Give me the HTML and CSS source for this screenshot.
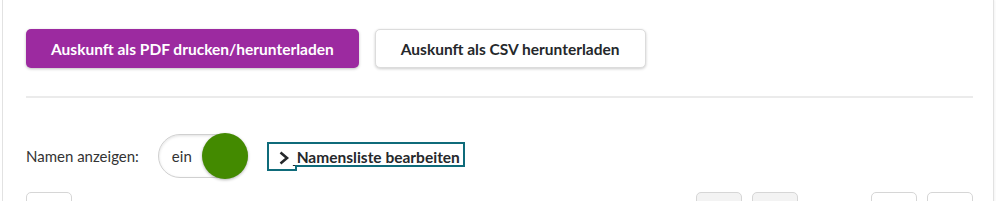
FILE: index.html
```html
<!DOCTYPE html>
<html lang="de">
<head>
    <meta charset="UTF-8">
    <meta name="viewport" content="width=device-width, initial-scale=1.0">
    <title>Auskunft</title>
    <link rel="stylesheet" href="styles.css">
</head>
<body>
    <div class="card">
        <div class="actions">
            <button class="button button-primary">Auskunft als PDF drucken/herunterladen</button>
            <button class="button button-secondary">Auskunft als CSV herunterladen</button>
        </div>

        <hr class="divider">

        <div class="names-row">
            <span class="names-label">Namen anzeigen:</span>
            <label class="toggle">
                <span class="toggle-text">ein</span>
                <span class="toggle-knob"></span>
            </label>
            <a class="edit-link" href="#">
                <svg class="chevron" width="12" height="14" viewBox="0 0 12 14">
                    <path d="M2.5 1.5 L9 7 L2.5 12.5" fill="none" stroke="#25282b" stroke-width="2.6"/>
                </svg>
                <span class="edit-text">&nbsp;Namensliste bearbeiten</span>
            </a>
        </div>

        <div class="pager">
            <div class="pager-box"></div>
            <div class="pager-spacer"></div>
            <div class="pager-box disabled"></div>
            <div class="pager-box disabled"></div>
            <div class="pager-info"></div>
            <div class="pager-box"></div>
            <div class="pager-box"></div>
        </div>
    </div>
</body>
</html>
```

FILE: styles.css
```css
body {
    margin: 0;
    background-color: #fff;
    font-family: Lato, "Liberation Sans", sans-serif;
    color: #333;
}

.card {
    margin: 0 5px 0 2px;
    padding: 29px 20px 0 23px;
    border-left: 1px solid #e2e2e2;
    border-right: 1px solid #e2e2e2;
    box-shadow: 1px 0 2px rgba(0, 0, 0, 0.05);
    height: 220px;
}

.actions {
    display: flex;
    gap: 16px;
}

.button {
    height: 39px;
    padding: 0 25px;
    border-radius: 5px;
    font-family: Lato, "Liberation Sans", sans-serif;
    font-size: 15.5px;
    font-weight: 700;
    cursor: pointer;
}

.button-primary {
    background-color: #9c2aa0;
    color: #fff;
    border: none;
    box-shadow: 0 1px 3px rgba(0, 0, 0, 0.25);
}

.button-secondary {
    background-color: #fff;
    color: #25282b;
    border: 1px solid #dcdcdc;
    box-shadow: 0 1px 3px rgba(0, 0, 0, 0.2);
}

.divider {
    margin: 28px 0 0;
    border: none;
    height: 2px;
    background-color: #ebebeb;
}

.names-row {
    display: flex;
    align-items: center;
    margin-top: 36px;
}

.names-label {
    font-size: 15px;
    color: #333;
    margin-right: 19px;
}

.toggle {
    position: relative;
    width: 88px;
    height: 42px;
    border: 1px solid #d0d0d0;
    border-radius: 22px;
    box-shadow: inset 0 1px 3px rgba(0, 0, 0, 0.12);
    display: flex;
    align-items: center;
    margin-right: 19px;
}

.toggle-text {
    font-size: 15px;
    color: #333;
    margin-left: 13px;
}

.toggle-knob {
    position: absolute;
    top: -2px;
    right: -1px;
    width: 46px;
    height: 46px;
    border-radius: 50%;
    background-color: #438a00;
    box-shadow: 0 1px 3px rgba(0, 0, 0, 0.3);
}

.edit-link {
    position: relative;
    display: inline-flex;
    align-items: center;
    height: 25px;
    padding: 0 3px 0 9px;
    border: 2px solid #0f6b7a;
    color: #25282b;
    text-decoration: none;
    margin-top: 1px;
}

.edit-link::after {
    content: "";
    position: absolute;
    left: 26px;
    right: -2px;
    bottom: -2px;
    height: 6px;
    box-sizing: border-box;
    border-top: 2px solid #0f6b7a;
    border-left: 2px solid #0f6b7a;
    background-color: #fff;
}

.chevron {
    display: block;
    margin-top: 2px;
    margin-right: 3px;
}

.edit-text {
    font-size: 15.5px;
    font-weight: 700;
    text-decoration: underline;
    text-underline-offset: 2px;
}

.pager {
    display: flex;
    gap: 10px;
    margin-top: 14px;
}

.pager-box {
    width: 44px;
    height: 40px;
    border: 1px solid #d6d6d6;
    border-radius: 5px;
    background-color: #fff;
}

.pager-box.disabled {
    background-color: #f3f3f3;
}

.pager-spacer {
    flex: 1;
}

.pager-info {
    width: 53px;
}
```
